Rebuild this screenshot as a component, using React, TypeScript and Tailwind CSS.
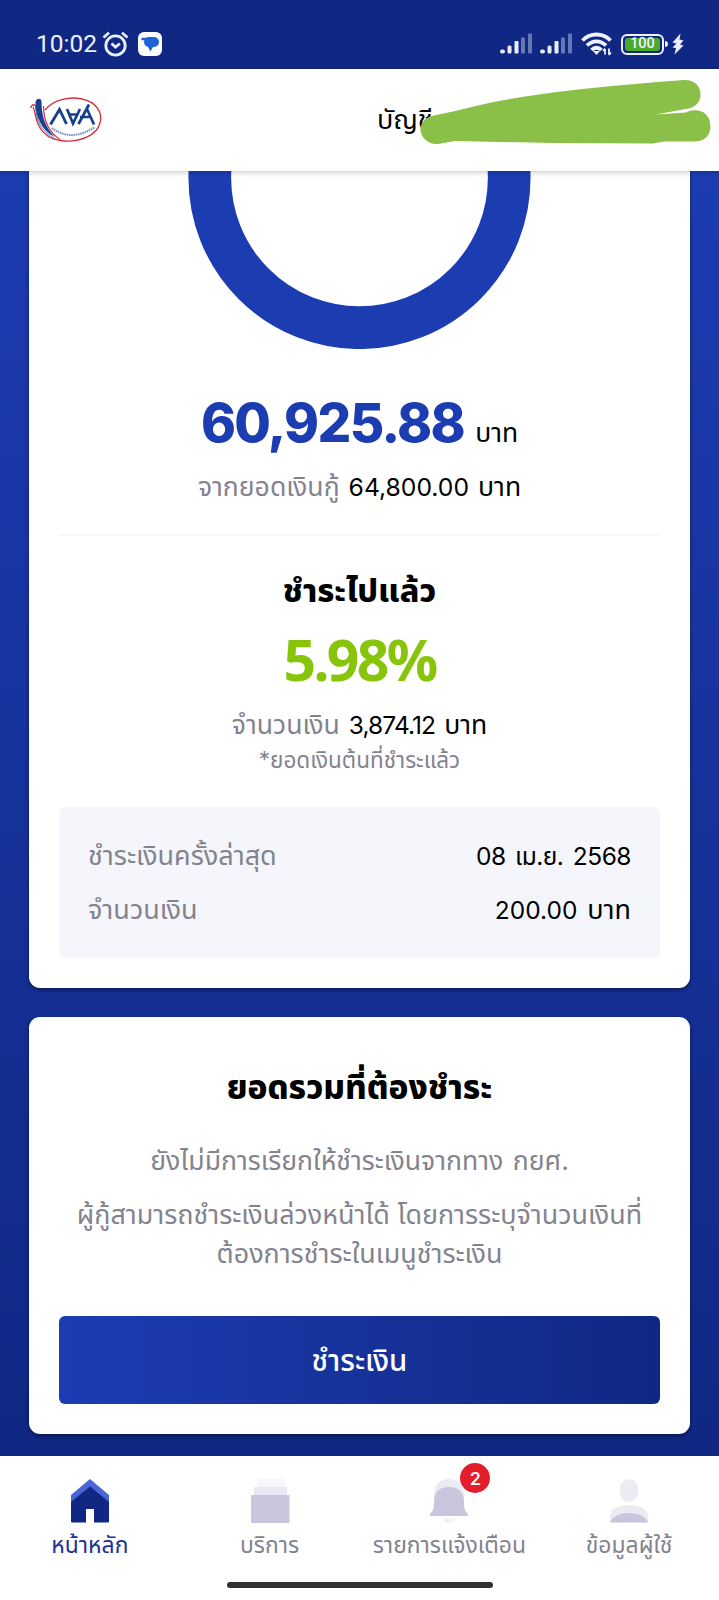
import type { ReactNode } from 'react';

const FONT = "font-['Inter','Noto_Sans_Thai','Noto_Sans',sans-serif]";

function SignalBars() {
  return (
    <svg width="32" height="22" viewBox="0 0 32 22" fill="#e9edff">
      <rect x="0" y="16.5" width="5" height="4" rx="2" />
      <rect x="7.5" y="12.5" width="4" height="8" rx="1.5" />
      <rect x="14.5" y="8" width="4" height="12.5" rx="1" />
      <rect x="21" y="4.5" width="4" height="16" rx="1" opacity="0.4" />
      <rect x="28" y="0.5" width="4" height="20" rx="1" opacity="0.4" />
    </svg>
  );
}

function StatusBar() {
  return (
    <div className="relative h-[69px] shrink-0 bg-[#102884] text-[#eef1ff]">
      <div className="flex h-full items-end justify-between pb-[12px] pl-[36px] pr-[35px]">
        <div className="flex h-[26px] items-center">
          <span className="w-[64px] whitespace-nowrap font-['Roboto',sans-serif] text-[24.5px] leading-[26px]">10:02</span>
          <svg className="ml-[2px]" width="27" height="26" viewBox="0 0 27 26" fill="none" stroke="#e9edff" strokeWidth="2.8">
            <circle cx="13.5" cy="14.5" r="9.7" />
            <path d="M1.5 6.5 7 1.8M25.5 6.5 20 1.8" />
            <path d="m9.5 12.5 4 3.6 4.4-3.6" />
          </svg>
          <svg className="ml-[9px]" width="24" height="24" viewBox="0 0 24 24">
            <rect width="24" height="24" rx="6" fill="#fbfcff" />
            <rect x="6" y="5" width="15" height="10" rx="5" fill="#1d63d8" />
            <path d="M9 13h7l-3.500 6.500Z" fill="#1d63d8" />
            <path d="M4.500 7h9" stroke="#1d63d8" strokeWidth="2.500" strokeLinecap="round" />
          </svg>
        </div>
        <div className="flex h-[26px] items-center">
          <SignalBars />
          <div className="ml-[8px] flex">
            <SignalBars />
          </div>
          <svg className="ml-[9px]" width="31" height="24" viewBox="0 0 31 24" fill="none" stroke="#eef1ff" strokeWidth="3.8">
            <path d="M1.500 8.500C9 0.500 22 0.500 29.500 8.500" />
            <path d="M6 13.500c5.500-5.500 13.500-5.500 19 0" />
            <path d="M10.500 18c3-3 7-3 10 0" />
            <path d="m12 19 3.500 4 3.500-4Z" fill="#eef1ff" stroke="none" />
            <path d="M24 17v5.500M28 16.500V23" strokeWidth="1.800" />
            <path d="m22 19 2-2.500M28 23l2-2.500" strokeWidth="1.500" />
          </svg>
          <div className="ml-[9px] flex h-[21px] w-[43px] items-center justify-center rounded-[6px] border-2 border-[#eef1ff] p-[2px]">
            <span className="flex h-full w-full items-center justify-center rounded-[3px] bg-[#4ba92c] pt-px font-['Roboto',sans-serif] text-[14.5px] font-medium leading-none">
              100
            </span>
          </div>
          <span className="ml-[1px] h-[6px] w-[3px] rounded-r-sm bg-[#eef1ff]" />
          <svg className="ml-[4px]" width="12" height="22" viewBox="0 0 12 22" fill="#e9edff">
            <path d="M8.500 0.500 0.500 9.500 4.500 10.500 0.500 14.500 4 15 2.500 21.500 11.500 12.500 8 11.500 11.500 7.500 7.500 6.500Z" />
          </svg>
        </div>
      </div>
    </div>
  );
}

function Logo() {
  return (
    <svg width="74" height="48" viewBox="0 0 74 48" fill="none">
      <path d="M15 14C23 4 39 0 52 3c14 3 21 13 18 24C67 39 51 46 34 45 20 44 12 37 8 28 5 21 5 14 3 11" stroke="#d6303d" strokeWidth="1.300" />
      <path d="M0.500 12 2.500 9h2.500" stroke="#d6303d" strokeWidth="1.300" />
      <path d="M13.500 10c0 15 5 26 17 34" stroke="#d6303d" strokeWidth="1.200" />
      <path d="M5.500 9c0 15 6 27 20 34" stroke="#5b74b4" strokeWidth="1" />
      <path d="M5.500 6c1-3.500 5-4.500 6-1 0 14 3 25 13 36C11 34 5 19 5.500 6Z" fill="#173f91" />
      <path d="m20.500 28.500 9-15 7 14.500" stroke="#173f91" strokeWidth="2.800" />
      <path d="m37 13 6 14.500 7-14.500M39 18.500h9" stroke="#173f91" strokeWidth="2.700" />
      <path d="M48.500 28 59 8.500M57 13l7 15.500M50 21h11" stroke="#173f91" strokeWidth="2.700" />
      <path d="M22 32c13 10 28 9 43-1" stroke="#6f89bd" strokeWidth="2" strokeDasharray="1.500 0.800" />
    </svg>
  );
}

function Header() {
  return (
    <header className="relative z-10 flex h-[102px] shrink-0 items-center bg-white shadow-[0_2px_5px_rgba(0,0,0,0.18)]">
      <div className="ml-[30px]">
        <Logo />
      </div>
      <span className="ml-[273px] whitespace-nowrap text-[27px] leading-[40px] text-black">บัญชี</span>
      <svg className="absolute left-[420px] top-[10px]" width="292" height="68" viewBox="420 79 292 68" fill="#8abf48">
        <path d="M434 115.500C450 112 465 109 480 105 510 98 540 94 570 90.500 610 86 650 82.500 684 80c11-.5 17 7 16.500 15.500-.5 7-5 11.500-12 13L656 114.500l30-2c3-2 8-2.500 12-2 8 1 12.500 8 12.500 16.500-.5 9-6 14-15 14.500h-31l-12 2-100-.5L455 141l-17 3c-9 1-17-6-17.500-14-.5-7 5-13 13.500-14.500Z" />
      </svg>
    </header>
  );
}

function InfoRow({ label, children }: { label: string; children: ReactNode }) {
  return (
    <div className="flex h-[54px] items-center justify-between leading-[54px]">
      <span className="text-[27px] text-[#83838f]">{label}</span>
      <span className="text-[24.5px] text-black [word-spacing:3px]">{children}</span>
    </div>
  );
}

function BalanceCard() {
  return (
    <section className="mx-[29px] h-[817px] rounded-b-[11px] bg-white px-[30px] text-center shadow-[0_2px_4px_rgba(0,0,30,0.5)]">
      <svg className="mx-auto block" width="344" height="178" viewBox="0 0 344 178">
        <circle cx="171.5" cy="7" r="149.700" fill="none" stroke="#1c3cb2" strokeWidth="42.700" />
      </svg>
      <div className="mt-[42px] flex h-[64px] items-baseline justify-center gap-[11px] whitespace-nowrap leading-[64px]">
        <span className="text-[53px] font-extrabold tracking-[-1.6px] text-[#1c3cb2]">60,925.88</span>
        <span className="text-[26.5px] text-black">บาท</span>
      </div>
      <p className="mt-[11px] flex h-[40px] items-baseline justify-center gap-[9px] whitespace-nowrap text-[26.6px] leading-[40px] text-black">
        <span className="text-[#83838f]">จากยอดเงินกู้</span>
        <span className="text-[24.7px]">64,800.00</span>
        <span>บาท</span>
      </p>
      <div className="mt-[28px] h-[2px] bg-[#f7f7f9]" />
      <h2 className="mt-[31px] h-[48px] text-[32.4px] font-extrabold leading-[48px] text-black">ชำระไปแล้ว</h2>
      <p className="mt-[12px] h-[64px] font-['Noto_Sans',sans-serif] text-[57px] font-bold leading-[64px] tracking-[-2.6px] text-[#88c40a]">5.98%</p>
      <p className="mt-[15px] flex h-[36px] items-baseline justify-center gap-[9px] whitespace-nowrap text-[26.6px] leading-[36px] text-black">
        <span className="text-[#83838f]">จำนวนเงิน</span>
        <span className="text-[24.5px] tracking-[-0.9px]">3,874.12</span>
        <span>บาท</span>
      </p>
      <p className="mt-[1px] h-[34px] text-[22.5px] leading-[34px] text-[#83838f]">*ยอดเงินต้นที่ชำระแล้ว</p>
      <div className="mt-[30px] h-[151px] rounded-[6px] bg-[#f5f6fb] px-[29px] pt-[22px]">
        <InfoRow label="ชำระเงินครั้งล่าสุด">
          <span className="tracking-[-0.5px]">08 เม.ย. 2568</span>
        </InfoRow>
        <InfoRow label="จำนวนเงิน">
          200.00 <span className="text-[27px]">บาท</span>
        </InfoRow>
      </div>
    </section>
  );
}

function DueCard() {
  return (
    <section className="mx-[29px] mt-[29px] h-[417px] rounded-[11px] bg-white px-[30px] pt-[46px] text-center shadow-[0_2px_4px_rgba(0,0,30,0.5)]">
      <h2 className="h-[48px] text-[33.2px] font-extrabold leading-[48px] text-black">ยอดรวมที่ต้องชำระ</h2>
      <p className="mt-[30px] h-[38px] whitespace-nowrap text-[26.6px] leading-[38px] text-[#83838f] [word-spacing:2px]">
        ยังไม่มีการเรียกให้ชำระเงินจากทาง กยศ.
      </p>
      <p className="mt-[16px] h-[78px] whitespace-nowrap text-[26.9px] leading-[39px] text-[#83838f]">
        ผู้กู้สามารถชำระเงินล่วงหน้าได้ โดยการระบุจำนวนเงินที่
        <br />
        ต้องการชำระในเมนูชำระเงิน
      </p>
      <button className="mt-[43px] h-[88px] w-full rounded-[6px] bg-linear-to-r from-[#1c3cb2] to-[#102884] pt-[2px] text-[29.4px] font-medium text-white">
        ชำระเงิน
      </button>
    </section>
  );
}

function NavItem({ label, active, children }: { label: string; active?: boolean; children: ReactNode }) {
  return (
    <div className="flex flex-1 flex-col items-center pt-[22px]">
      <div className="relative h-[46px] w-[40px]">{children}</div>
      <span className={active ? 'mt-[5px] whitespace-nowrap text-[22.9px] leading-[32px] text-[#1c3394]' : 'mt-[5px] whitespace-nowrap text-[22.9px] leading-[32px] text-[#83838f]'}>
        {label}
      </span>
    </div>
  );
}

function BottomNav() {
  return (
    <nav className="relative h-[144px] shrink-0 bg-white">
      <div className="flex">
        <NavItem label="หน้าหลัก" active>
          <svg width="40" height="46" viewBox="0 0 40 46">
            <path d="M1 17 20 1l19 16v10H1Z" fill="#4a65d6" />
            <path d="M1 24 20 8.500 39 24v19.500a1 1 0 0 1-1 1H24V31h-8v13.500H2a1 1 0 0 1-1-1Z" fill="#102884" />
          </svg>
        </NavItem>
        <NavItem label="บริการ">
          <svg width="40" height="46" viewBox="0 0 40 46">
            <rect x="7" y="0.500" width="28" height="12" rx="1" fill="#f7f7fb" />
            <rect x="4" y="9" width="33" height="12" rx="1" fill="#e9e9f2" />
            <rect x="1" y="17" width="38.500" height="28" rx="1" fill="#c7c6dc" />
          </svg>
        </NavItem>
        <NavItem label="รายการแจ้งเตือน">
          <svg width="40" height="46" viewBox="0 0 40 46">
            <path d="M5 17C5 6 11 1 20 1s15 5 15 16v10H5Z" fill="#ebebf3" />
            <path d="M5 24C5 14 11 9 20 9s15 5 15 15c0 7 1 9 4 12v2H1v-2c3-3 4-5 4-12Z" fill="#c7c6dc" />
            <path d="M14 41h12c-1 2-3 4-6 4s-5-2-6-4Z" fill="#f1f1f5" />
          </svg>
          <span className="absolute left-[31px] top-[-15px] flex h-[30px] w-[30px] items-center justify-center rounded-full bg-[#e31e2b] font-['Roboto',sans-serif] text-[19px] font-medium leading-none text-white">
            2
          </span>
        </NavItem>
        <NavItem label="ข้อมูลผู้ใช้">
          <svg width="40" height="46" viewBox="0 0 40 46">
            <rect x="11" y="1" width="18" height="23" rx="9" fill="#ebebf3" />
            <path d="M1 44.500V38C1 31 9 27 20 27s19 4 19 11v6.500Z" fill="#ebebf3" />
            <path d="M1 44.500C3 38 12 35 20 35s17 3 19 9.500Z" fill="#c7c6dc" />
          </svg>
        </NavItem>
      </div>
      <div className="mx-auto mt-[21px] h-[6px] w-[266px] rounded-full bg-[#303030]" />
    </nav>
  );
}

export default function App() {
  return (
    <div className={`flex h-[1600px] w-[719px] flex-col overflow-hidden bg-white ${FONT}`}>
      <StatusBar />
      <Header />
      <main className="h-[1285px] shrink-0 bg-linear-to-b from-[#1c3cb2] to-[#102884]">
        <BalanceCard />
        <DueCard />
      </main>
      <BottomNav />
    </div>
  );
}
